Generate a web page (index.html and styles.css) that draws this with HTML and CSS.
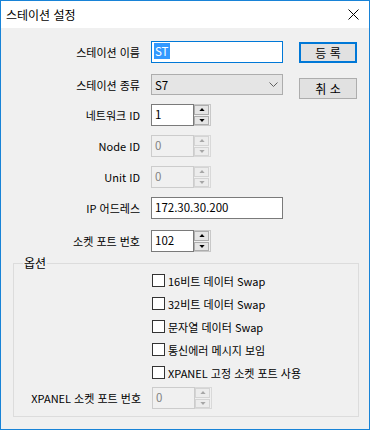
FILE: index.html
```html
<!DOCTYPE html>
<html lang="ko">
<head>
    <meta charset="UTF-8">
    <title>스테이션 설정</title>
    <link rel="stylesheet" href="styles.css">
</head>
<body>
    <div class="window">
        <div class="titlebar">
            <span class="title">스테이션 설정</span>
            <svg class="close" viewBox="0 0 11 11"><path d="M0.5 0.5 L10.5 10.5 M10.5 0.5 L0.5 10.5"/></svg>
        </div>

        <div class="top">
            <div class="form">
                <div class="row">
                    <span class="label">스테이션 이름</span>
                    <div class="edit wide focus"><span class="sel">ST</span></div>
                </div>
                <div class="row row-gap combo-row">
                    <span class="label">스테이션 종류</span>
                    <div class="combo">
                        <span>S7</span>
                        <svg class="chevron" viewBox="0 0 9 5"><path d="M0.5 0.5 L4.5 4.5 L8.5 0.5"/></svg>
                    </div>
                </div>
                <div class="row">
                    <span class="label">네트워크 ID</span>
                    <div class="spinner">
                        <div class="edit">1</div>
                        <div class="spin">
                            <span class="spin-btn"><svg class="arrow" viewBox="0 0 7 4"><path d="M0 4 L3.5 0 L7 4Z"/></svg></span>
                            <span class="spin-btn"><svg class="arrow" viewBox="0 0 7 4"><path d="M0 0 L3.5 4 L7 0Z"/></svg></span>
                        </div>
                    </div>
                </div>
                <div class="row">
                    <span class="label">Node ID</span>
                    <div class="spinner disabled">
                        <div class="edit">0</div>
                        <div class="spin">
                            <span class="spin-btn"><svg class="arrow" viewBox="0 0 7 4"><path d="M0 4 L3.5 0 L7 4Z"/></svg></span>
                            <span class="spin-btn"><svg class="arrow" viewBox="0 0 7 4"><path d="M0 0 L3.5 4 L7 0Z"/></svg></span>
                        </div>
                    </div>
                </div>
                <div class="row">
                    <span class="label">Unit ID</span>
                    <div class="spinner disabled">
                        <div class="edit">0</div>
                        <div class="spin">
                            <span class="spin-btn"><svg class="arrow" viewBox="0 0 7 4"><path d="M0 4 L3.5 0 L7 4Z"/></svg></span>
                            <span class="spin-btn"><svg class="arrow" viewBox="0 0 7 4"><path d="M0 0 L3.5 4 L7 0Z"/></svg></span>
                        </div>
                    </div>
                </div>
                <div class="row">
                    <span class="label">IP 어드레스</span>
                    <div class="edit wide">172.30.30.200</div>
                </div>
                <div class="row row-gap">
                    <span class="label">소켓 포트 번호</span>
                    <div class="spinner">
                        <div class="edit">102</div>
                        <div class="spin">
                            <span class="spin-btn"><svg class="arrow" viewBox="0 0 7 4"><path d="M0 4 L3.5 0 L7 4Z"/></svg></span>
                            <span class="spin-btn"><svg class="arrow" viewBox="0 0 7 4"><path d="M0 0 L3.5 4 L7 0Z"/></svg></span>
                        </div>
                    </div>
                </div>
            </div>

            <div class="buttons">
                <button class="btn default">등 록</button>
                <button class="btn">취 소</button>
            </div>
        </div>

        <fieldset class="options">
            <legend>옵션</legend>
            <div class="options-grid">
                <label class="check"><span class="box"></span>16비트 데이터 Swap</label>
                <label class="check"><span class="box"></span>32비트 데이터 Swap</label>
                <label class="check"><span class="box"></span>문자열 데이터 Swap</label>
                <label class="check"><span class="box"></span>통신에러 메시지 보임</label>
                <label class="check"><span class="box"></span>XPANEL 고정 소켓 포트 사용</label>

                <span class="label xpanel">XPANEL 소켓 포트 번호</span>
                <div class="spinner disabled xpanel">
                    <div class="edit">0</div>
                    <div class="spin">
                        <span class="spin-btn"><svg class="arrow" viewBox="0 0 7 4"><path d="M0 4 L3.5 0 L7 4Z"/></svg></span>
                        <span class="spin-btn"><svg class="arrow" viewBox="0 0 7 4"><path d="M0 0 L3.5 4 L7 0Z"/></svg></span>
                    </div>
                </div>
            </div>
        </fieldset>
    </div>
</body>
</html>
```

FILE: styles.css
```css
* {
    box-sizing: border-box;
}
body {
    margin: 0;
    font-family: "Noto Sans CJK KR", "Noto Sans", sans-serif;
    font-size: 11px;
    color: #000;
    background-color: #fff;
}
.window {
    width: 370px;
    height: 430px;
    border: 1px solid #1883d7;
    background-color: #f0f0f0;
    display: flex;
    flex-direction: column;
}
.titlebar {
    height: 27px;
    flex: none;
    background-color: #fff;
    display: flex;
    align-items: center;
    justify-content: space-between;
    padding: 0 10px 0 5px;
}
.title {
    font-size: 12px;
}
.close {
    width: 11px;
    height: 11px;
    stroke: #000;
    stroke-width: 1;
    fill: none;
}

/* Formulaire principal */
.top {
    display: flex;
    padding-top: 13px;
}
.form {
    width: 282px;
    display: flex;
    flex-direction: column;
}
.row {
    display: flex;
    align-items: center;
    gap: 11px;
    height: 22px;
    margin-top: 9px;
}
.row:first-child {
    margin-top: 0;
}
.row-gap {
    margin-top: 11px;
}
.combo-row {
    height: 21px;
}
.label {
    width: 139px;
    text-align: right;
    white-space: nowrap;
}
.edit {
    height: 22px;
    border: 1px solid #7a7a7a;
    background-color: #fff;
    padding: 0 3px;
    line-height: 19px;
    font-size: 11.5px;
    white-space: nowrap;
}
.edit.wide {
    width: 132px;
}
.edit.focus {
    border-color: #0078d7;
    padding-left: 2px;
}
.sel {
    background-color: #3399ff;
    color: #fff;
    padding: 0 1px;
}
.combo {
    width: 132px;
    height: 21px;
    border: 1px solid #adadad;
    background-color: #e5e5e5;
    display: flex;
    align-items: center;
    justify-content: space-between;
    padding: 0 4px 0 3px;
    font-size: 11.5px;
}
.chevron {
    width: 9px;
    height: 5px;
    fill: none;
    stroke: #606060;
    stroke-width: 1;
}

/* Spinner (edit + boutons haut/bas) */
.spinner {
    display: flex;
    height: 22px;
}
.spinner .edit {
    width: 43px;
}
.spin {
    width: 17px;
    height: 22px;
    border: 1px solid #c8c8c8;
    border-left: none;
    display: flex;
    flex-direction: column;
    gap: 1px;
    padding-right: 1px;
}
.spin-btn {
    flex: 1;
    border: 1px solid #adadad;
    background-color: #e5e5e5;
    display: flex;
    align-items: center;
    justify-content: center;
}
.arrow {
    width: 6px;
    height: 3px;
    fill: #000;
}
.spinner.disabled .edit {
    border-color: #cccccc;
    background-color: #f0f0f0;
    color: #838383;
}
.spinner.disabled .spin {
    border-color: #d9d9d9;
}
.spinner.disabled .spin-btn {
    border-color: #d4d4d4;
    background-color: #ececec;
}
.spinner.disabled .arrow {
    fill: #a6a6a6;
}

/* Boutons */
.buttons {
    margin-left: 16px;
    padding-top: 1px;
    display: flex;
    flex-direction: column;
    gap: 15px;
}
.btn {
    width: 58px;
    height: 21px;
    padding: 0;
    border: 1px solid #adadad;
    background-color: #e1e1e1;
    font-family: inherit;
    font-size: 12px;
    color: #000;
}
.btn.default {
    border: 2px solid #0078d7;
}

/* Groupe d'options */
.options {
    margin: 3px 10px 0 12px;
    border: 1px solid #dcdcdc;
    padding: 3px 0 7px 0;
    min-width: 0;
}
.options legend {
    margin-left: 9px;
    padding: 0 1px;
    font-size: 12px;
    line-height: 16px;
}
.options-grid {
    display: grid;
    grid-template-columns: 127px auto;
    column-gap: 11px;
    row-gap: 10px;
    align-items: center;
}
.check {
    grid-column: 2;
    display: flex;
    align-items: center;
    gap: 3px;
    height: 13px;
    white-space: nowrap;
}
.box {
    width: 13px;
    height: 13px;
    border: 1px solid #333;
    background-color: #fff;
}
.xpanel {
    margin-top: -2px;
}
.options .label {
    width: 127px;
}
```
